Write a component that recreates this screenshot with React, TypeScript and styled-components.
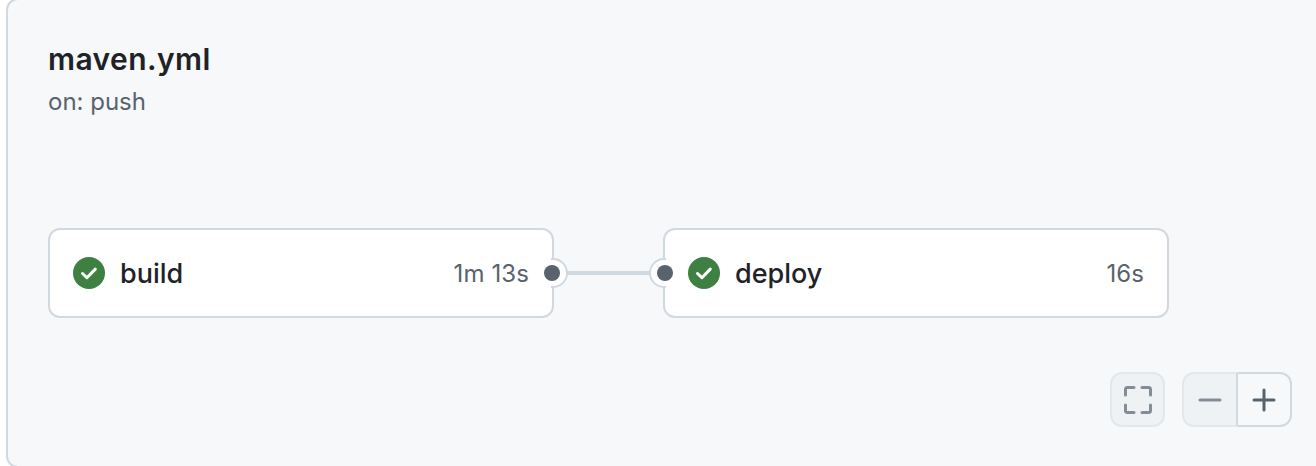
import React from "react";
import styled, { createGlobalStyle } from "styled-components";

const GlobalStyle = createGlobalStyle`
  html, body {
    margin: 0;
    padding: 0;
    height: 466px;
    overflow: hidden;
    background: #ffffff;
    font-family: Inter, "Liberation Sans", sans-serif;
  }
`;

const Page = styled.div`
  width: 1316px;
  height: 466px;
  overflow: hidden;
  padding-left: 6px;
  box-sizing: border-box;
`;

const Panel = styled.section`
  width: 1340px;
  height: 470px;
  margin-top: -2px;
  box-sizing: border-box;
  padding: 41px 0 0 40px;
  background: #f6f8fa;
  border: 2px solid #d1d9e0;
  border-radius: 12px;
  display: flex;
  flex-direction: column;
`;

const Title = styled.h2`
  margin: 0;
  font-size: 30px;
  line-height: 36px;
  font-weight: 600;
  letter-spacing: 0.42px;
  color: #1f2328;
`;

const Trigger = styled.div`
  margin-top: 9px;
  font-size: 24px;
  line-height: 32px;
  color: #59636e;
`;

const Graph = styled.div`
  display: flex;
  align-items: center;
  margin-top: 110px;
`;

const JobCard = styled.div`
  position: relative;
  width: 506px;
  height: 90px;
  box-sizing: border-box;
  padding: 0 23px;
  display: flex;
  align-items: center;
  gap: 15px;
  background: #ffffff;
  border: 2px solid #d1d9e0;
  border-radius: 12px;
`;

const JobName = styled.span`
  flex: 1;
  font-size: 27px;
  font-weight: 500;
  color: #1f2328;
`;

const Duration = styled.span`
  font-size: 24px;
  letter-spacing: 0.1px;
  color: #59636e;
`;

const Port = styled.span<{ $side: "left" | "right" }>`
  position: absolute;
  top: 50%;
  ${(p) => p.$side}: -16px;
  width: 30px;
  height: 30px;
  transform: translateY(-50%);
  box-sizing: border-box;
  background: #ffffff;
  border: 2px solid #d1d9e0;
  border-radius: 50%;
  clip-path: ${(p) =>
    p.$side === "right"
      ? "inset(-2px -2px -2px 13px)"
      : "inset(-2px 13px -2px -2px)"};
`;

const PortCover = styled.span<{ $side: "left" | "right" }>`
  position: absolute;
  top: 50%;
  ${(p) => p.$side}: -2px;
  width: 4px;
  height: 26px;
  transform: translateY(-50%);
  background: #ffffff;
`;

const PortDot = styled.span<{ $side: "left" | "right" }>`
  position: absolute;
  top: 50%;
  ${(p) => p.$side}: -8px;
  width: 16px;
  height: 16px;
  transform: translateY(-50%);
  background: #59636e;
  border-radius: 50%;
`;

const Connector = styled.div`
  width: 109px;
  height: 4px;
  background: #d1d9e0;
`;

const Controls = styled.div`
  display: flex;
  justify-content: flex-end;
  gap: 17px;
  margin-top: 54px;
  padding-right: 52px;
`;

const ControlGroup = styled.div`
  display: flex;
`;

const ControlButton = styled.button<{ $pos?: "left" | "right"; $on?: boolean }>`
  width: ${(p) => (p.$pos === "right" ? "54px" : p.$pos === "left" ? "56px" : "55px")};
  height: 55px;
  padding: 0;
  box-sizing: border-box;
  display: flex;
  align-items: center;
  justify-content: center;
  background: ${(p) => (p.$on ? "#f6f8fa" : "#eff2f5")};
  border: 2px solid ${(p) => (p.$on ? "#d1d9e0" : "#e3e7eb")};
  border-left-width: ${(p) => (p.$pos === "right" ? "0" : "2px")};
  border-right: ${(p) => (p.$pos === "left" ? "2px solid #d1d9e0" : undefined)};
  border-radius: ${(p) =>
    p.$pos === "left"
      ? "12px 0 0 12px"
      : p.$pos === "right"
        ? "0 12px 12px 0"
        : "12px"};
`;

function StatusCheck() {
  return (
    <svg width="32" height="32" viewBox="0 0 32 32" aria-hidden="true" style={{ flexShrink: 0 }}>
      <circle cx="16" cy="16" r="16" fill="#3d8041" />
      <path
        d="M9.5 16.5l4.4 4.2 8.4-8.6"
        fill="none"
        stroke="#ffffff"
        strokeWidth="3"
        strokeLinecap="round"
        strokeLinejoin="round"
      />
    </svg>
  );
}

function FitIcon() {
  return (
    <svg width="28" height="28" viewBox="0 0 28 28" fill="none" stroke="#848d97" strokeWidth="3" strokeLinecap="round" strokeLinejoin="round" aria-hidden="true">
      <path d="M1.5 9V3a1.5 1.5 0 0 1 1.5-1.5h7" />
      <path d="M18 1.5h7a1.5 1.5 0 0 1 1.5 1.5v6" />
      <path d="M1.5 19v6a1.5 1.5 0 0 0 1.5 1.5h7" />
      <path d="M18 26.5h7a1.5 1.5 0 0 0 1.5-1.5v-6" />
    </svg>
  );
}

function MinusIcon() {
  return (
    <svg width="24" height="24" viewBox="0 0 24 24" fill="none" stroke="#848d97" strokeWidth="3" strokeLinecap="round" aria-hidden="true">
      <path d="M2 12h20" />
    </svg>
  );
}

function PlusIcon() {
  return (
    <svg width="24" height="24" viewBox="0 0 24 24" fill="none" stroke="#59636e" strokeWidth="3" strokeLinecap="round" aria-hidden="true">
      <path d="M2 12h20M12 2v20" />
    </svg>
  );
}

const jobs = [
  { name: "build", time: "1m 13s", port: "right" as const },
  { name: "deploy", time: "16s", port: "left" as const },
];

export default function App() {
  return (
    <>
      <GlobalStyle />
      <Page>
        <Panel>
          <Title>maven.yml</Title>
          <Trigger>on: push</Trigger>
          <Graph>
            {jobs.map((job, i) => (
              <React.Fragment key={job.name}>
                {i > 0 && <Connector />}
                <JobCard>
                  <StatusCheck />
                  <JobName>{job.name}</JobName>
                  <Duration>{job.time}</Duration>
                  <Port $side={job.port} />
                  <PortCover $side={job.port} />
                  <PortDot $side={job.port} />
                </JobCard>
              </React.Fragment>
            ))}
          </Graph>
          <Controls>
            <ControlButton aria-label="Fit">
              <FitIcon />
            </ControlButton>
            <ControlGroup>
              <ControlButton $pos="left" aria-label="Zoom out">
                <MinusIcon />
              </ControlButton>
              <ControlButton $pos="right" $on aria-label="Zoom in">
                <PlusIcon />
              </ControlButton>
            </ControlGroup>
          </Controls>
        </Panel>
      </Page>
    </>
  );
}
